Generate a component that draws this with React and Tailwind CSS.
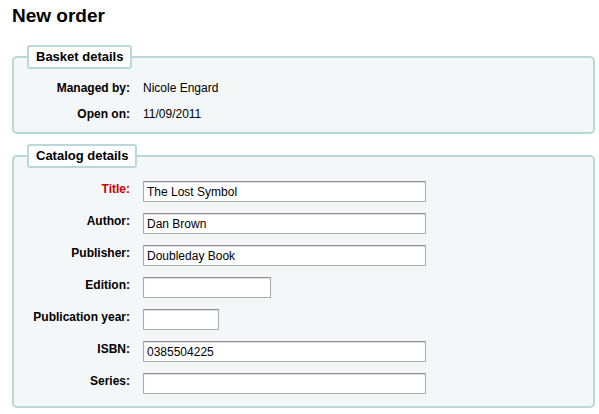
import React from "react";

const basket = [
  { label: "Managed by:", value: "Nicole Engard" },
  { label: "Open on:", value: "11/09/2011" },
];

const catalog = [
  { label: "Title:", value: "The Lost Symbol", width: "w-[283px]", required: true },
  { label: "Author:", value: "Dan Brown", width: "w-[283px]" },
  { label: "Publisher:", value: "Doubleday Book", width: "w-[283px]" },
  { label: "Edition:", value: "", width: "w-[128px]" },
  { label: "Publication year:", value: "", width: "w-[76px]" },
  { label: "ISBN:", value: "0385504225", width: "w-[283px]" },
  { label: "Series:", value: "", width: "w-[283px]" },
];

const Legend = ({ children }) => (
  <legend className="ml-[13px] px-[7px] h-[24px] leading-[20px] bg-white border-2 border-[#b9d8d9] rounded-[3px] text-[13px] font-bold text-black">
    {children}
  </legend>
);

export default function App() {
  return (
    <div
      className="bg-white min-h-[414px] text-black"
      style={{ fontFamily: '"Liberation Sans", Arial, sans-serif' }}
    >
      <h1 className="pl-[12px] pt-[4px] text-[19px] leading-[24px] font-bold">New order</h1>

      {/* Basket details */}
      <fieldset className="mt-[17px] ml-[12px] mr-[4px] border-2 border-[#b9d8d9] rounded-[5px] bg-[#f3f7f8] pb-[10px]">
        <Legend>Basket details</Legend>
        <div className="grid grid-cols-[116px_1fr] gap-x-[13px] gap-y-[11px] pt-[12px] text-[12px] leading-[15px]">
          {basket.map((row) => (
            <React.Fragment key={row.label}>
              <div className="text-right font-bold">{row.label}</div>
              <div>{row.value}</div>
            </React.Fragment>
          ))}
        </div>
      </fieldset>

      {/* Catalog details */}
      <fieldset className="mt-[10px] ml-[12px] mr-[4px] border-2 border-[#b9d8d9] rounded-[5px] bg-[#f3f7f8] pb-[12px]">
        <Legend>Catalog details</Legend>
        <div className="flex flex-col gap-[11px] pt-[13px] text-[12px]">
          {catalog.map((row) => (
            <div key={row.label} className="flex items-start gap-[13px]">
              <div
                className={`w-[116px] shrink-0 text-right font-bold leading-[15px] pt-[1px] ${
                  row.required ? "text-[#cc0000]" : "text-black"
                }`}
              >
                {row.label}
              </div>
              <input
                type="text"
                defaultValue={row.value}
                className={`${row.width} h-[21px] px-[3px] bg-white border border-[#ababab] border-t-[#8f8f8f] shadow-[inset_0_1px_1px_rgba(0,0,0,0.12)] text-[12px] text-black outline-none`}
              />
            </div>
          ))}
        </div>
      </fieldset>
    </div>
  );
}
